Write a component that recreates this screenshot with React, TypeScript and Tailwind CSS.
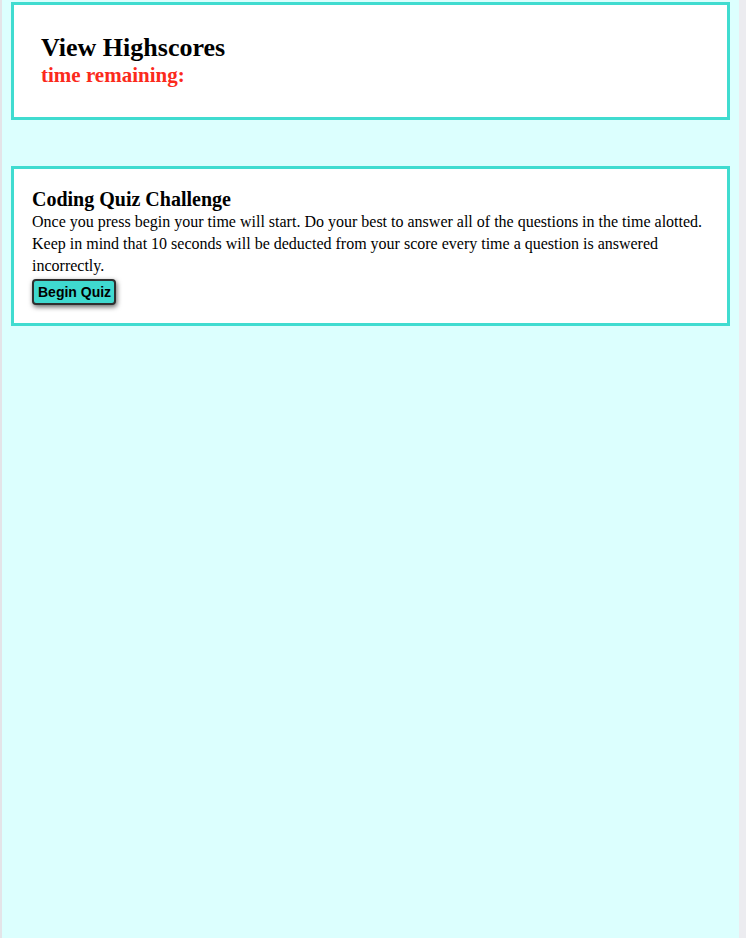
import React from "react";

export default function App() {
  return (
    <div className="flex min-h-[938px] w-full" style={{ fontFamily: '"Liberation Serif", "Times New Roman", serif' }}>
      <div className="w-[2px] bg-[#e4e4e8]" />
      <div className="flex-1 bg-[#dcfffe] px-[9px] pt-[2px]">
        <header className="h-[118px] border-[3px] border-[#40dcd0] bg-white pl-[27px] pt-[28px]">
          <h1 className="text-[26px] font-bold leading-[30px] text-black">View Highscores</h1>
          <p className="text-[21px] font-bold leading-[24px] text-[#fb2a1c]">time remaining:</p>
        </header>
        <section className="mt-[46px] h-[160px] border-[3px] border-[#40dcd0] bg-white pl-[18px] pr-[18px] pt-[18px]">
          <h2 className="text-[20px] font-bold leading-[24px] text-black">Coding Quiz Challenge</h2>
          <p className="text-[16px] leading-[22px] text-black">
            Once you press begin your time will start. Do your best to answer all of the questions in the time alotted. Keep in mind that 10 seconds will be deducted from your score every time a question is answered incorrectly.
          </p>
          <button
            className="mt-[2px] rounded-[4px] border-2 border-[#2f2f2f] bg-[#3fd9cf] pl-[4px] pr-[3px] py-[3px] text-[14px] font-bold leading-[16px] text-black shadow-[1px_2px_5px_rgba(0,0,0,0.6)]"
            style={{ fontFamily: '"Liberation Sans", Arial, sans-serif' }}
          >
            Begin Quiz
          </button>
        </section>
      </div>
      <div className="w-[7px] bg-[#ececf0]" />
    </div>
  );
}
